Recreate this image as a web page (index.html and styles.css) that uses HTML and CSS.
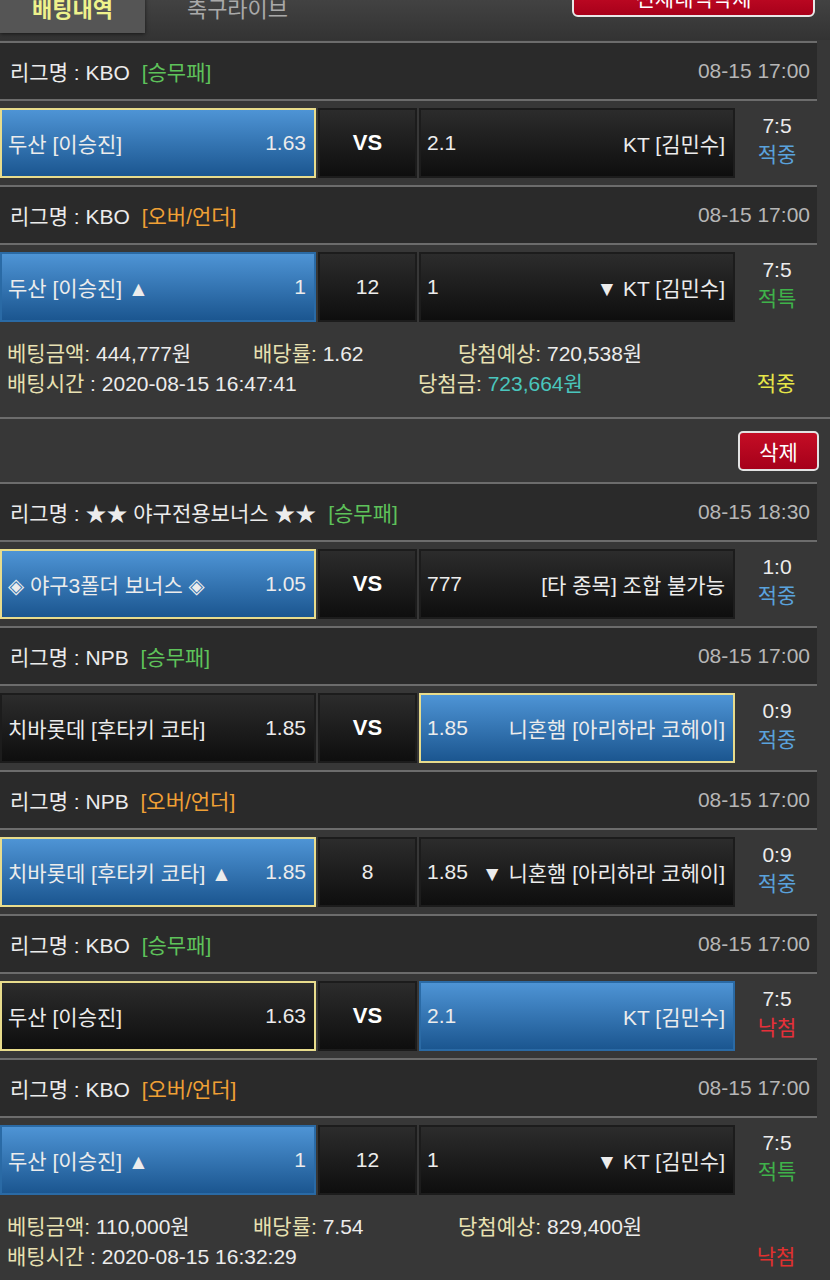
FILE: index.html
```html
<!DOCTYPE html>
<html lang="ko">
<head>
    <meta charset="UTF-8">
    <meta name="viewport" content="width=device-width, initial-scale=1.0">
    <title>배팅내역</title>
    <link rel="stylesheet" href="styles.css">
</head>
<body>
    <!-- Tabs -->
    <div class="topbar">
        <div class="tabs">
            <div class="tab active">배팅내역</div>
            <div class="tab live">축구라이브</div>
            <button class="btn-clear">전체내역삭제</button>
        </div>
    </div>

    <div class="list">
        <!-- Bet 1 -->
        <div class="league">
            <span>리그명 : KBO <span class="tag win">[승무패]</span></span>
            <span class="date">08-15 17:00</span>
        </div>
        <div class="match">
            <div class="cell side blue picked"><span>두산 [이승진]</span><span>1.63</span></div>
            <div class="cell mid bold">VS</div>
            <div class="cell side"><span>2.1</span><span>KT [김민수]</span></div>
            <div class="result"><div>7:5</div><div class="hit">적중</div></div>
        </div>

        <div class="league">
            <span>리그명 : KBO <span class="tag ou">[오버/언더]</span></span>
            <span class="date">08-15 17:00</span>
        </div>
        <div class="match">
            <div class="cell side blue"><span>두산 [이승진] ▲</span><span>1</span></div>
            <div class="cell mid">12</div>
            <div class="cell side"><span>1</span><span>▼ KT [김민수]</span></div>
            <div class="result"><div>7:5</div><div class="void">적특</div></div>
        </div>

        <div class="bet-info">
            <div class="info-row">
                <span class="col1"><em>베팅금액:</em> 444,777원</span>
                <span class="col2"><em>배당률:</em> 1.62</span>
                <span><em>당첨예상:</em> 720,538원</span>
            </div>
            <div class="info-row">
                <span class="wide"><em>배팅시간</em> : 2020-08-15 16:47:41</span>
                <span class="grow"><em>당첨금:</em> <span class="paid">723,664원</span></span>
                <span class="status won">적중</span>
            </div>
        </div>
        <div class="bet-actions">
            <button class="btn-del">삭제</button>
        </div>

        <!-- Bet 2 -->
        <div class="league">
            <span>리그명 : ★★ 야구전용보너스 ★★ <span class="tag win">[승무패]</span></span>
            <span class="date">08-15 18:30</span>
        </div>
        <div class="match">
            <div class="cell side blue picked"><span>◈ 야구3폴더 보너스 ◈</span><span>1.05</span></div>
            <div class="cell mid bold">VS</div>
            <div class="cell side"><span>777</span><span>[타 종목] 조합 불가능</span></div>
            <div class="result"><div>1:0</div><div class="hit">적중</div></div>
        </div>

        <div class="league">
            <span>리그명 : NPB <span class="tag win">[승무패]</span></span>
            <span class="date">08-15 17:00</span>
        </div>
        <div class="match">
            <div class="cell side"><span>치바롯데 [후타키 코타]</span><span>1.85</span></div>
            <div class="cell mid bold">VS</div>
            <div class="cell side blue picked"><span>1.85</span><span>니혼햄 [아리하라 코헤이]</span></div>
            <div class="result"><div>0:9</div><div class="hit">적중</div></div>
        </div>

        <div class="league">
            <span>리그명 : NPB <span class="tag ou">[오버/언더]</span></span>
            <span class="date">08-15 17:00</span>
        </div>
        <div class="match">
            <div class="cell side blue picked"><span>치바롯데 [후타키 코타] ▲</span><span>1.85</span></div>
            <div class="cell mid">8</div>
            <div class="cell side"><span>1.85</span><span>▼ 니혼햄 [아리하라 코헤이]</span></div>
            <div class="result"><div>0:9</div><div class="hit">적중</div></div>
        </div>

        <div class="league">
            <span>리그명 : KBO <span class="tag win">[승무패]</span></span>
            <span class="date">08-15 17:00</span>
        </div>
        <div class="match">
            <div class="cell side picked"><span>두산 [이승진]</span><span>1.63</span></div>
            <div class="cell mid bold">VS</div>
            <div class="cell side blue"><span>2.1</span><span>KT [김민수]</span></div>
            <div class="result"><div>7:5</div><div class="miss">낙첨</div></div>
        </div>

        <div class="league">
            <span>리그명 : KBO <span class="tag ou">[오버/언더]</span></span>
            <span class="date">08-15 17:00</span>
        </div>
        <div class="match">
            <div class="cell side blue"><span>두산 [이승진] ▲</span><span>1</span></div>
            <div class="cell mid">12</div>
            <div class="cell side"><span>1</span><span>▼ KT [김민수]</span></div>
            <div class="result"><div>7:5</div><div class="void">적특</div></div>
        </div>

        <div class="bet-info">
            <div class="info-row">
                <span class="col1"><em>베팅금액:</em> 110,000원</span>
                <span class="col2"><em>배당률:</em> 7.54</span>
                <span><em>당첨예상:</em> 829,400원</span>
            </div>
            <div class="info-row">
                <span class="wide"><em>배팅시간</em> : 2020-08-15 16:32:29</span>
                <span class="grow"></span>
                <span class="status lost">낙첨</span>
            </div>
        </div>
    </div>
</body>
</html>
```

FILE: styles.css
```css
body {
    margin: 0;
    width: 830px;
    height: 1280px;
    overflow: hidden;
    background-color: #373737;
    color: #ececec;
    font-family: "Liberation Sans", "Noto Sans CJK KR", "DejaVu Sans", sans-serif;
    font-size: 21px;
}
.topbar {
    height: 40px;
    overflow: hidden;
    background: linear-gradient(#424242, #333);
}
.tabs {
    display: flex;
    align-items: flex-start;
    margin-top: -20px;
    height: 53px;
}
.tab {
    width: 145px;
    height: 53px;
    line-height: 60px;
    text-align: center;
    color: #a9a9a9;
    font-size: 22px;
}
.tab.live {
    width: 185px;
}
.tab.active {
    background-color: #555;
    color: #eef28c;
    font-weight: bold;
    box-shadow: 0 1px 4px rgba(0,0,0,0.6);
}
.btn-clear {
    margin-left: auto;
    margin-right: 15px;
    margin-top: -3px;
    width: 243px;
    height: 40px;
    border: 2px solid #e8e8e8;
    border-radius: 6px;
    background: linear-gradient(#d0112b, #a8001a);
    color: white;
    font-family: inherit;
    font-size: 21px;
}
.list {
    padding-top: 1px;
}
.league {
    width: 817px;
    height: 58px;
    box-sizing: border-box;
    border-top: 2px solid #6c6c6c;
    background-color: #2a2a2a;
    display: flex;
    align-items: center;
    justify-content: space-between;
    padding: 0 7px 0 10px;
}
.tag {
    margin-left: 6px;
}
.tag.win {
    color: #5ec25a;
}
.tag.ou {
    color: #f0a035;
}
.date {
    color: #b6b6b6;
}
.match {
    width: 817px;
    height: 86px;
    box-sizing: border-box;
    border-top: 2px solid #6c6c6c;
    display: flex;
    align-items: center;
    gap: 2px;
}
.cell {
    height: 70px;
    box-sizing: border-box;
    border: 2px solid #1c1c1c;
    background: linear-gradient(#2c2c2c, #0e0e0e);
    display: flex;
    align-items: center;
}
.cell.side {
    width: 316px;
    justify-content: space-between;
    padding: 0 8px 0 6px;
}
.cell.mid {
    width: 99px;
    justify-content: center;
}
.cell.bold {
    font-weight: bold;
    font-size: 22px;
    color: white;
}
.cell.blue {
    background: linear-gradient(#4e94d5, #1b5690);
    border-color: #2a6aa5;
}
.cell.picked {
    border-color: #e8dc8c;
}
.result {
    flex: 1;
    text-align: center;
    line-height: 29px;
    padding-bottom: 6px;
}
.hit {
    color: #5aa2dc;
}
.void {
    color: #3fb24a;
}
.miss {
    color: #e5303a;
}
.bet-info {
    padding: 10px 0 18px 7px;
    line-height: 30px;
}
.info-row {
    display: flex;
}
.info-row em {
    font-style: normal;
    color: #e8e1b2;
}
.col1 {
    width: 246px;
}
.col2 {
    width: 205px;
}
.wide {
    width: 411px;
}
.grow {
    flex: 1;
}
.paid {
    color: #4ac6bd;
}
.status {
    width: 82px;
    margin-right: 13px;
    text-align: center;
}
.status.won {
    color: #e6e648;
}
.status.lost {
    color: #e0302f;
}
.bet-actions {
    height: 65px;
    box-sizing: border-box;
    border-top: 2px solid #6c6c6c;
    display: flex;
    align-items: center;
    justify-content: flex-end;
    padding-right: 11px;
}
.btn-del {
    width: 81px;
    height: 40px;
    border: 2px solid #e2e2e2;
    border-radius: 5px;
    background: linear-gradient(#c40d25, #a6001a);
    color: white;
    font-family: inherit;
    font-size: 21px;
}
```
